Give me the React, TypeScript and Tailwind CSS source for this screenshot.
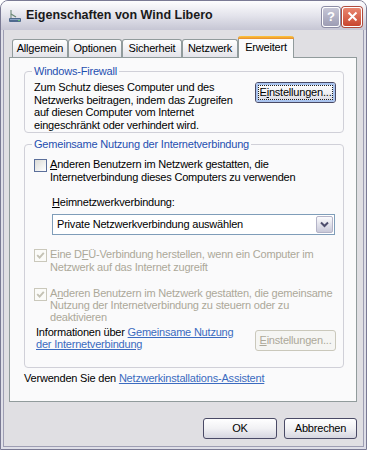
import React from "react";

function Check({ checked, disabled }: { checked?: boolean; disabled?: boolean }) {
  return (
    <span
      className={`mt-[1px] flex h-[13px] w-[13px] shrink-0 items-center justify-center border ${
        disabled ? "border-[#cac8bb] bg-[#fbfbf8]" : "border-[#5b6f9a] bg-gradient-to-br from-[#dcdcd7] to-white"
      }`}
    >
      {checked && (
        <svg width="9" height="9" viewBox="0 0 9 9">
          <path
            d="M1.2 4.2 L3.6 6.6 L7.8 1.8"
            stroke={disabled ? "#c4c2b4" : "#21a121"}
            strokeWidth="1.9"
            fill="none"
          />
        </svg>
      )}
    </span>
  );
}

function Btn({
  children,
  w,
  focus,
  disabled,
}: {
  children: React.ReactNode;
  w: string;
  focus?: boolean;
  disabled?: boolean;
}) {
  if (disabled) {
    return (
      <div
        className={`${w} flex h-[21px] shrink-0 items-center justify-center rounded-[3px] border border-[#cac8bb] bg-[#f5f5f3] text-[#aca899]`}
      >
        {children}
      </div>
    );
  }
  return (
    <div
      className={`${w} flex h-[21px] shrink-0 items-center justify-center rounded-[3px] border border-[#4a4a66] bg-gradient-to-b from-white via-[#f1f1f4] to-[#d6d6e0] text-black`}
    >
      <div
        className={`flex h-full w-full items-center justify-center rounded-[2px] ${
          focus ? "border-2 border-[#aac4ef]" : ""
        }`}
      >
        <span
          className={`flex h-full w-full items-center justify-center ${
            focus ? "border border-dotted border-[#222]" : ""
          }`}
        >
          {children}
        </span>
      </div>
    </div>
  );
}

function Tab({ label, w, active }: { label: string; w: string; active?: boolean }) {
  if (active) {
    return (
      <div
        className={`${w} relative flex h-[22px] flex-col items-center rounded-t-[3px] border-x border-[#919b9c] bg-[#fafafb]`}
      >
        <div className="h-[3px] w-[calc(100%+2px)] -mx-px rounded-t-[3px] bg-gradient-to-b from-[#ffc83c] to-[#e68b2c]" />
        <span className="mt-[2px] leading-[13px]">{label}</span>
      </div>
    );
  }
  return (
    <div
      className={`${w} mb-[1px] flex h-[18px] items-center justify-center rounded-t-[3px] border-x border-t border-[#919b9c] bg-gradient-to-b from-white to-[#e4e4ea]`}
    >
      <span className="leading-[13px]">{label}</span>
    </div>
  );
}

function Group({ title, children, className }: { title: string; children: React.ReactNode; className?: string }) {
  return (
    <div className={`relative rounded-[4px] border border-[#d0d0d8] ${className ?? ""}`}>
      <span className="absolute -top-[7px] left-[7px] bg-[#fafafb] px-[2px] leading-[13px] text-[#1f4fb0]">
        {title}
      </span>
      {children}
    </div>
  );
}

export default function App() {
  return (
    <div className="flex h-[450px] w-[367px] flex-col overflow-hidden whitespace-nowrap rounded-t-[8px] border border-[#7a7a94] bg-[#dfdfe8] font-['Liberation_Sans',Arial,sans-serif] text-[11px] text-black">
      {/* title bar */}
      <div className="flex h-[29px] shrink-0 items-center bg-gradient-to-b from-[#fdfdfe] via-[#e4e4ec] to-[#c6c6d4] pl-[6px] pr-[4px]">
        <svg width="16" height="16" viewBox="0 0 16 16" className="mt-[1px]">
          <path d="M4 2 L4 10" stroke="#8fa39a" strokeWidth="1.5" />
          <path d="M4 6 L9 9" stroke="#6b8a76" strokeWidth="1.3" />
          <rect x="2" y="10" width="12" height="4" rx="1" fill="#4f6a8e" />
          <rect x="3" y="11" width="10" height="1" fill="#8aa2c4" />
          <circle cx="12" cy="12.5" r="0.8" fill="#6fdc6f" />
        </svg>
        <span className="ml-[3px] text-[12.5px] font-bold leading-none text-[#1a1a1a]">
          Eigenschaften von Wind Libero
        </span>
        <div className="ml-auto flex items-center gap-[2px] pt-[2px]">
          <div className="flex h-[20px] w-[18px] items-center justify-center rounded-[3px] border border-white bg-gradient-to-b from-[#c6c6d6] to-[#9d9db4] shadow-[0_0_0_1px_#8c8ca4]">
            <span className="text-[13px] font-bold leading-none text-white">?</span>
          </div>
          <div className="flex h-[20px] w-[20px] items-center justify-center rounded-[3px] border border-white bg-gradient-to-b from-[#e9866f] to-[#c8452f] shadow-[0_0_0_1px_#b04a3c]">
            <svg width="11" height="11" viewBox="0 0 11 11">
              <path d="M1.5 1.5 L9.5 9.5 M9.5 1.5 L1.5 9.5" stroke="white" strokeWidth="2" />
            </svg>
          </div>
        </div>
      </div>

      {/* body */}
      <div className="flex flex-1 flex-col px-[2px] pb-[2px] tracking-[-0.2px]">
        <div className="flex flex-1 flex-col border-x border-b border-[#9e9eb3] bg-[#e0dfe3] px-[5px] pb-[7px] pr-[6px] pt-[6px]">
          {/* tabs */}
          <div className="relative z-10 flex h-[22px] items-end pl-[3px]">
            <Tab label="Allgemein" w="w-[56px]" />
            <Tab label="Optionen" w="w-[54px]" />
            <Tab label="Sicherheit" w="w-[60px]" />
            <Tab label="Netzwerk" w="w-[56px]" />
            <Tab label="Erweitert" w="w-[56px]" active />
          </div>

          {/* panel */}
          <div className="-mt-px flex h-[345px] flex-col border border-[#919b9c] bg-[#fafafb] pl-[14px] pr-[12px]">
            <Group title="Windows-Firewall" className="mt-[13px]">
              <div className="flex pb-[1px] pl-[9px] pr-[7px] pt-[9px]">
                <div className="leading-[12.5px]">
                  <div>Zum Schutz dieses Computer und des</div>
                  <div>Netzwerks beitragen, indem das Zugreifen</div>
                  <div>auf diesen Computer vom Internet</div>
                  <div>eingeschränkt oder verhindert wird.</div>
                </div>
                <div className="ml-auto mt-[1px]">
                  <Btn w="w-[81px]" focus>
                    <span>
                      E<u>i</u>nstellungen...
                    </span>
                  </Btn>
                </div>
              </div>
            </Group>

            <Group title="Gemeinsame Nutzung der Internetverbindung" className="mt-[11px]">
              <div className="flex flex-col pb-[16px] pl-[9px] pr-[7px] pt-[13px]">
                <div className="flex gap-[3px]">
                  <Check />
                  <div className="leading-[13px]">
                    <div>
                      <u>A</u>nderen Benutzern im Netzwerk gestatten, die
                    </div>
                    <div>Internetverbindung dieses Computers zu verwenden</div>
                  </div>
                </div>

                <div className="ml-[18px] mt-[12px] leading-[13px]">
                  <u>H</u>eimnetzwerkverbindung:
                </div>
                <div className="ml-[18px] mt-[4.5px] flex h-[21px] w-[283px] items-center border border-[#7f9db9] bg-white pl-[4px] pr-[1px]">
                  <span>Private Netzwerkverbindung auswählen</span>
                  <div className="ml-auto flex h-[17px] w-[17px] items-center justify-center rounded-[2px] border border-[#b4b4c8] bg-gradient-to-b from-[#fbfbfd] to-[#c9c9d9]">
                    <svg width="9" height="7" viewBox="0 0 9 7">
                      <path d="M1 1.5 L4.5 5 L8 1.5" stroke="#4d4d6d" strokeWidth="2" fill="none" />
                    </svg>
                  </div>
                </div>

                <div className="mt-[13.5px] flex gap-[3px] text-[#aca899]">
                  <Check checked disabled />
                  <div className="leading-[12.5px]">
                    <div>
                      Eine D<u>F</u>Ü-Verbindung herstellen, wenn ein Computer im
                    </div>
                    <div>Netzwerk auf das Internet zugreift</div>
                  </div>
                </div>

                <div className="mt-[14px] flex gap-[3px] text-[#aca899]">
                  <Check checked disabled />
                  <div className="leading-[12px]">
                    <div>
                      A<u>n</u>deren Benutzern im Netzwerk gestatten, die gemeinsame
                    </div>
                    <div>Nutzung der Internetverbindung zu steuern oder zu</div>
                    <div>deaktivieren</div>
                  </div>
                </div>

                <div className="mt-[2.5px] flex items-start">
                  <div className="ml-[2px] leading-[12px]">
                    <div>
                      Informationen über{" "}
                      <span className="text-[#3b6bc0] underline">Gemeinsame Nutzung</span>
                    </div>
                    <div className="text-[#3b6bc0] underline">der Internetverbindung</div>
                  </div>
                  <div className="ml-auto mt-[4px]">
                    <Btn w="w-[81px]" disabled>
                      <span>
                        <u>E</u>instellungen...
                      </span>
                    </Btn>
                  </div>
                </div>
              </div>
            </Group>

            <div className="mt-[4px] leading-[13px]">
              Verwenden Sie den{" "}
              <span className="text-[#3b6bc0] underline">Netzwerkinstallations-Assistent</span>
            </div>
          </div>

          {/* dialog buttons */}
          <div className="mt-[16px] flex justify-end gap-[7px]">
            <Btn w="w-[74px]">OK</Btn>
            <Btn w="w-[73px]">Abbrechen</Btn>
          </div>
        </div>
      </div>
    </div>
  );
}
